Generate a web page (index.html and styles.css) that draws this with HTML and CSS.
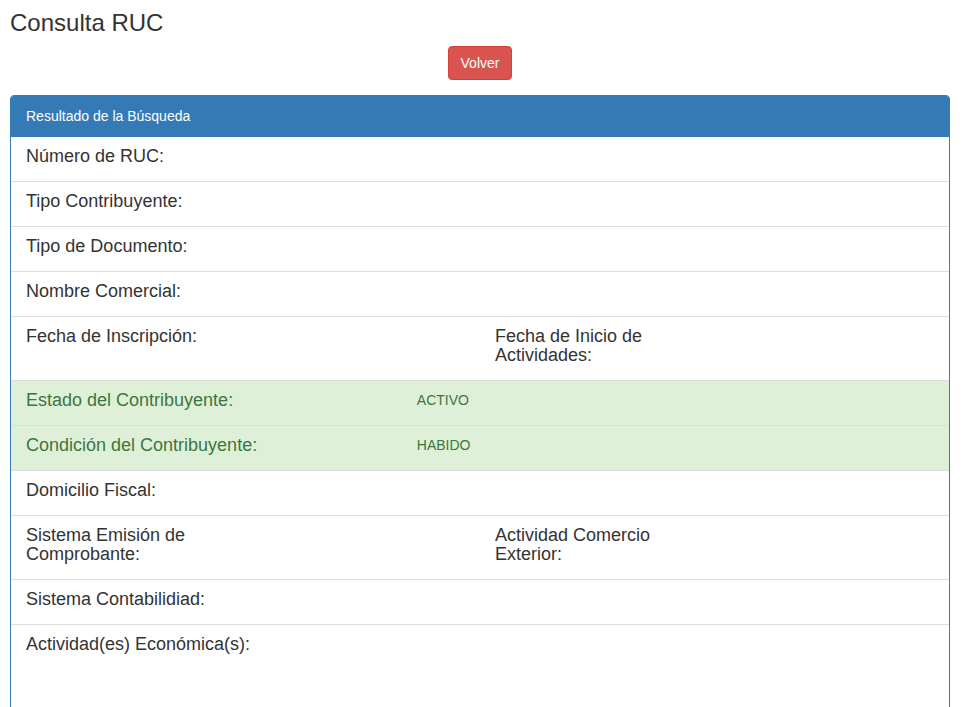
FILE: index.html
```html
<!DOCTYPE html>
<html lang="es">
<head>
<meta charset="utf-8">
<title>Consulta RUC</title>
<link rel="stylesheet" href="styles.css">
</head>
<body>
<div class="page">
  <h3 class="title">Consulta RUC</h3>
  <div class="actions">
    <button class="btn btn-danger" type="button">Volver</button>
  </div>
  <div class="panel">
    <div class="panel-heading">Resultado de la Búsqueda</div>
    <div class="list-group">
      <div class="item">
        <div class="col-label"><h4 class="heading">Número de RUC:</h4></div>
        <div class="col-value"></div>
      </div>
      <div class="item">
        <div class="col-label"><h4 class="heading">Tipo Contribuyente:</h4></div>
        <div class="col-value"></div>
      </div>
      <div class="item">
        <div class="col-label"><h4 class="heading">Tipo de Documento:</h4></div>
        <div class="col-value"></div>
      </div>
      <div class="item">
        <div class="col-label"><h4 class="heading">Nombre Comercial:</h4></div>
        <div class="col-value"></div>
      </div>
      <div class="item">
        <div class="half">
          <div class="half-label"><h4 class="heading">Fecha de Inscripción:</h4></div>
          <div class="half-value"></div>
        </div>
        <div class="half">
          <div class="half-label"><h4 class="heading">Fecha de Inicio de Actividades:</h4></div>
          <div class="half-value"></div>
        </div>
      </div>
      <div class="item success">
        <div class="col-label"><h4 class="heading">Estado del Contribuyente:</h4></div>
        <div class="col-value"><p class="text">ACTIVO</p></div>
      </div>
      <div class="item success">
        <div class="col-label"><h4 class="heading">Condición del Contribuyente:</h4></div>
        <div class="col-value"><p class="text">HABIDO</p></div>
      </div>
      <div class="item">
        <div class="col-label"><h4 class="heading">Domicilio Fiscal:</h4></div>
        <div class="col-value"></div>
      </div>
      <div class="item">
        <div class="half">
          <div class="half-label"><h4 class="heading">Sistema Emisión de Comprobante:</h4></div>
          <div class="half-value"></div>
        </div>
        <div class="half">
          <div class="half-label"><h4 class="heading">Actividad Comercio Exterior:</h4></div>
          <div class="half-value"></div>
        </div>
      </div>
      <div class="item">
        <div class="col-label"><h4 class="heading">Sistema Contabilidiad:</h4></div>
        <div class="col-value"></div>
      </div>
      <div class="item item-tall">
        <div class="col-label"><h4 class="heading">Actividad(es) Económica(s):</h4></div>
        <div class="col-value"></div>
      </div>
    </div>
  </div>
</div>
</body>
</html>
```

FILE: styles.css
```css
* {
  box-sizing: border-box;
}

html, body {
  margin: 0;
  padding: 0;
  background: #ffffff;
}

body {
  font-family: "Liberation Sans", Arial, Helvetica, sans-serif;
  font-size: 14px;
  line-height: 20px;
  color: #333333;
}

.page {
  padding: 10px 0 0 10px;
  width: 950px;
}

.title {
  margin: 0 0 10px 0;
  font-size: 24px;
  line-height: 26px;
  font-weight: 400;
  color: #333333;
}

.actions {
  display: flex;
  justify-content: center;
  margin-bottom: 15px;
}

.btn {
  font-family: inherit;
  font-size: 14px;
  line-height: 20px;
  padding: 6px 12px;
  border-radius: 4px;
  border: 1px solid transparent;
  cursor: pointer;
}

.btn-danger {
  color: #ffffff;
  background-color: #d9534f;
  border-color: #d43f3a;
}

.panel {
  width: 940px;
  border: 1px solid #337ab7;
  border-radius: 4px;
  background: #ffffff;
  min-height: 640px;
}

.panel-heading {
  background: #337ab7;
  color: #ffffff;
  padding: 10px 15px;
  font-size: 14px;
  line-height: 20px;
  border-bottom: 1px solid #337ab7;
  border-radius: 3px 3px 0 0;
}

.item {
  display: flex;
  padding: 10px 0;
  border-top: 1px solid #dddddd;
}

.item:first-child {
  border-top: 0;
}

.item.success {
  background-color: #dff0d8;
  color: #3c763d;
}

.item-tall {
  min-height: 120px;
}

.col-label {
  flex: 0 0 41.6667%;
  padding: 0 15px;
}

.col-value {
  flex: 1 1 auto;
  padding: 0 15px;
}

.half {
  flex: 0 0 50%;
  display: flex;
}

.half-label {
  flex: 0 0 50%;
  padding: 0 15px;
}

.half-value {
  flex: 1 1 auto;
  padding: 0 15px;
}

.heading {
  margin: 0 0 5px 0;
  font-size: 18px;
  line-height: 19px;
  font-weight: 400;
}

.text {
  margin: 0;
  font-size: 14px;
  line-height: 19px;
}
```
